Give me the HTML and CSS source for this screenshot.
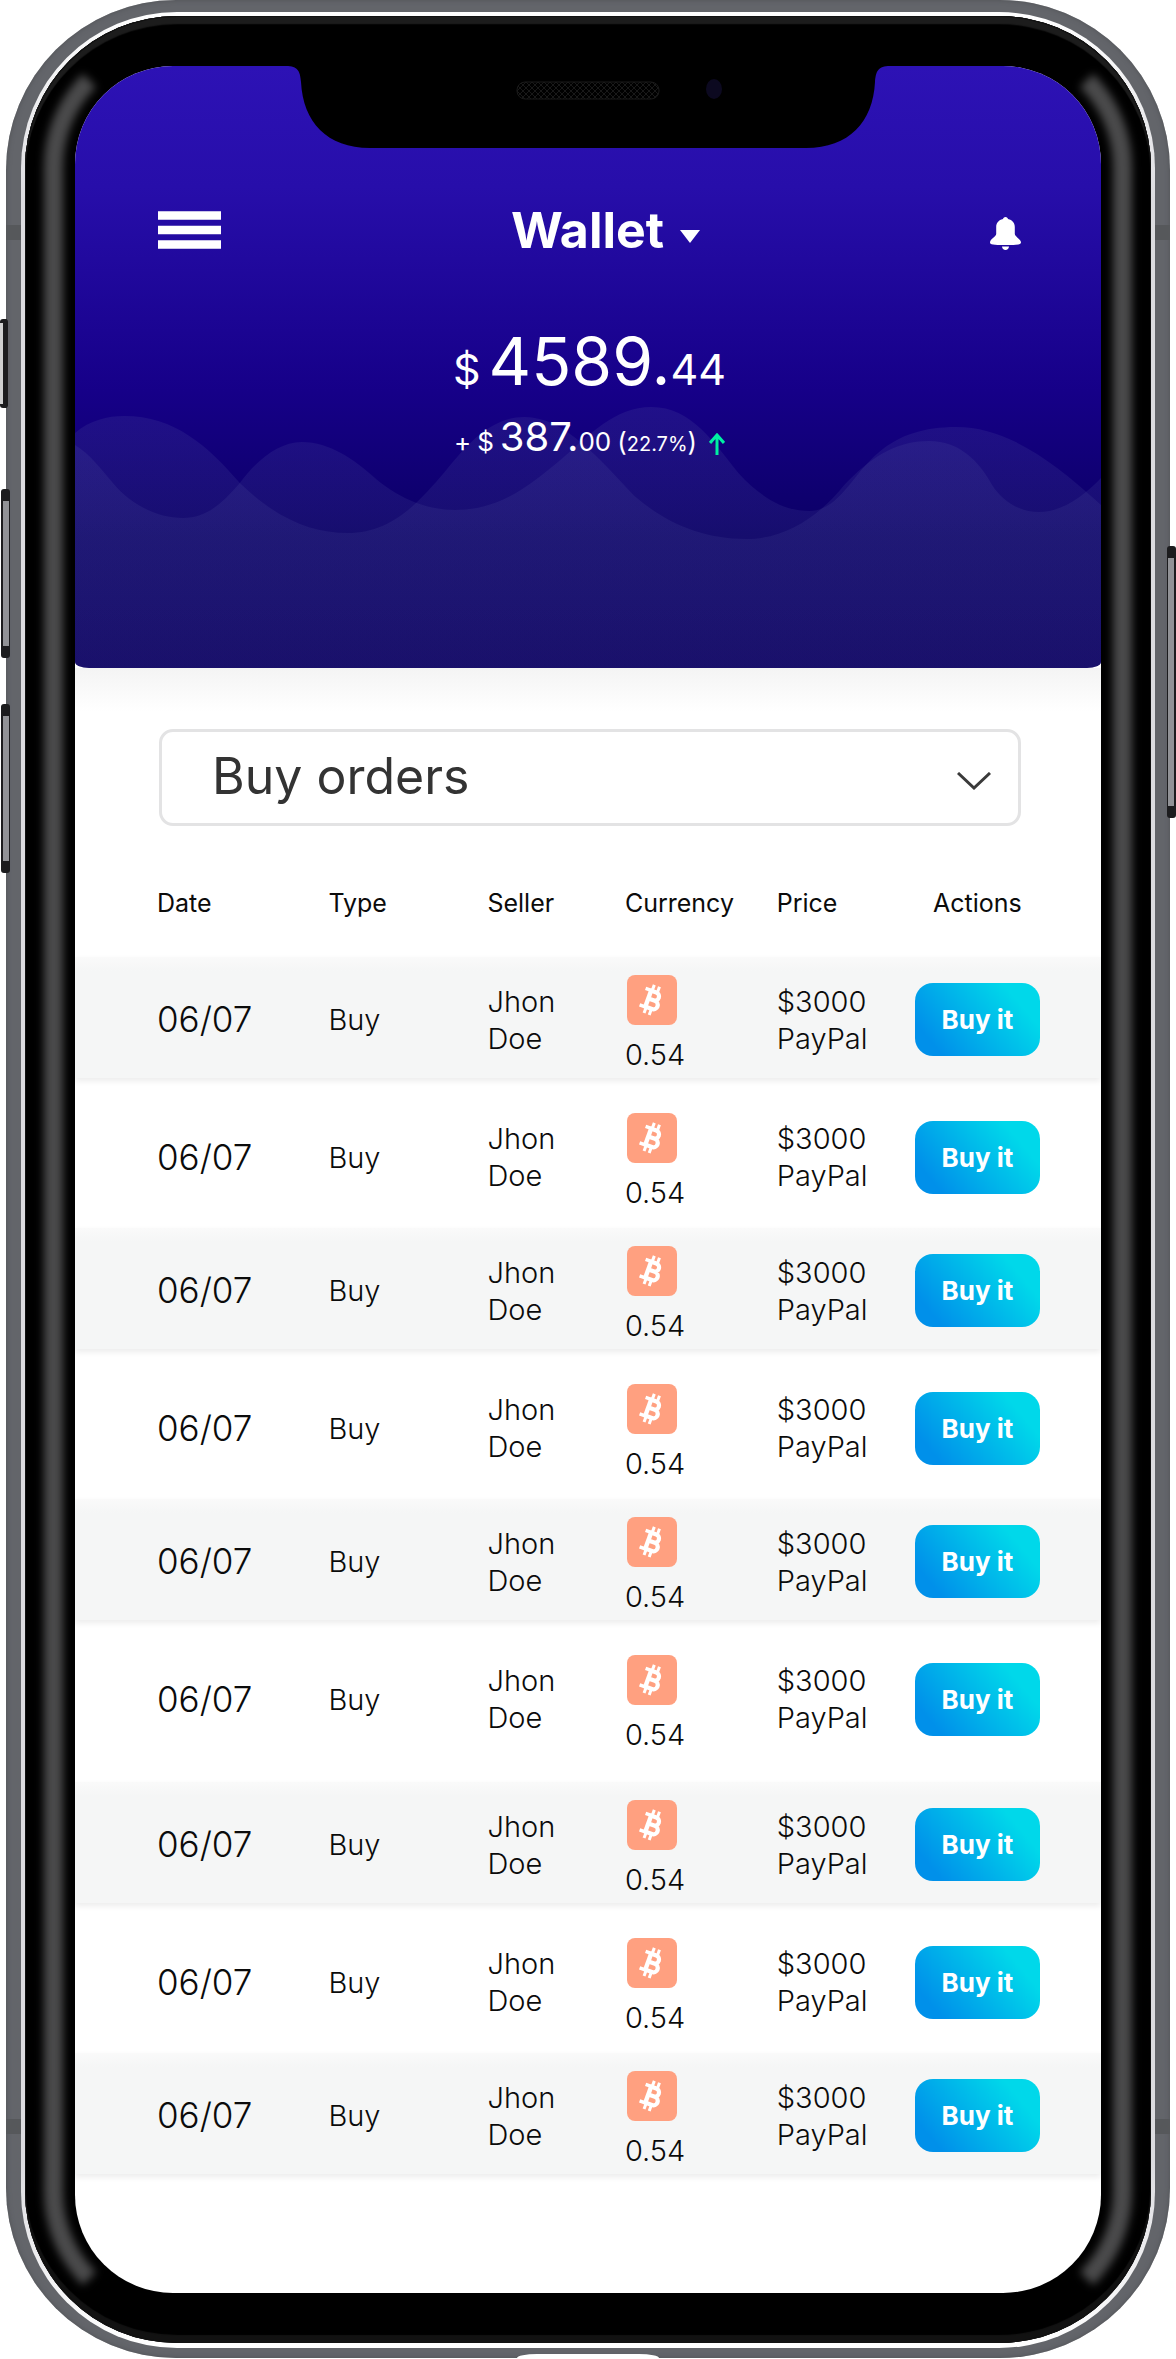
FILE: index.html
```html
<!DOCTYPE html>
<html lang="en">
<head>
<meta charset="utf-8">
<meta name="viewport" content="width=device-width, initial-scale=1">
<title>Wallet</title>
<link rel="stylesheet" href="styles.css">
</head>
<body>
<svg class="defs" aria-hidden="true">
  <symbol id="btc" viewBox="0 0 50 50">
    <g transform="rotate(20 25 25)" fill="none" stroke="#fff">
      <path d="M20 16.500H26.500A4 4 0 0 1 26.500 24.800H21M26.500 24.800H28A4.300 4.300 0 0 1 28 33.500H20" stroke-width="4.200"/>
      <path d="M21 15V35" stroke-width="4.400"/>
      <path d="M15 16.200H21M15 33.800H21" stroke-width="3.400"/>
      <path d="M22 10V16M27.500 10V16M22 34V40M27.500 34V40" stroke-width="3"/>
    </g>
  </symbol>
</svg>
<div class="phone">
  <i class="key key-mute"></i><i class="key key-up"></i><i class="key key-down"></i><i class="key key-power"></i>
  <i class="band band-top"></i><i class="band band-bottom"></i>
  <i class="port"></i>
  <div class="rim">
    <div class="bezel">
      <svg class="notch" viewBox="0 0 604 84" aria-hidden="true">
        <defs>
          <pattern id="mesh" width="6" height="6" patternUnits="userSpaceOnUse"><path d="M0 0L6 6M6 0L0 6" stroke="#191919" stroke-width="1"/></pattern>
        </defs>
        <path d="M0 0H604V2C592 2 590 7 589 18C587 58 563 84 520 84H84C41 84 17 58 15 18C14 7 12 2 0 2Z" fill="#000"/>
        <rect x="231" y="18" width="142" height="17" rx="8" fill="url(#mesh)" stroke="#1a1a1a"/>
        <ellipse cx="428" cy="25" rx="8" ry="10" fill="#0c0920"/>
      </svg>
      <main class="screen">
        <header class="hero">
          <svg class="waves" viewBox="0 0 1027 602" preserveAspectRatio="none" aria-hidden="true">
            <defs>
              <linearGradient id="haze" gradientUnits="userSpaceOnUse" x1="0" y1="340" x2="0" y2="602">
                <stop offset="0" stop-color="#5a5fa5" stop-opacity="0.17"/>
                <stop offset="0.4" stop-color="#5a5fa5" stop-opacity="0.15"/>
                <stop offset="1" stop-color="#5a5fa5" stop-opacity="0.09"/>
              </linearGradient>
            </defs>
            <path d="M0 367C15 354 33 350 49 350C100 350 133 380 165 417C202 453 237 467 273 467C318 467 345 435 370 406C395 375 418 351 450 351C490 351 525 393 560 430C590 456 627 473 672 473C712 473 745 450 770 419C795 393 820 375 855 375C885 375 905 395 918 419C928 435 945 446 965 446C988 446 1010 430 1027 412V602H0Z"/>
            <path d="M0 379C15 388 26 403 38 417C55 438 82 452 108 452C134 452 150 434 165 417C182 394 204 376 227 376C255 376 280 394 298 410C320 430 350 444 380 444C425 444 455 420 487 393C515 369 540 341 577 341C617 341 640 377 664 407C687 432 710 445 735 445C765 445 778 408 805 386C825 369 850 361 882 361C930 361 975 391 1027 439V602H0Z"/>
          </svg>
          <div class="bar">
            <button class="icon-button" aria-label="Menu">
              <svg width="63" height="38" viewBox="0 0 63 38"><path d="M0 4.500H63M0 19H63M0 33.500H63" stroke="#fff" stroke-width="8.500"/></svg>
            </button>
            <button class="title">Wallet
              <svg width="20" height="13" viewBox="0 0 20 13"><path d="M0 0H20L10 13Z" fill="#fff"/></svg>
            </button>
            <button class="icon-button" aria-label="Notifications">
              <svg class="bell" width="31" height="33" viewBox="0 0 31 33" fill="#fff"><path d="M15.500 0C17 0 17.800 1 18 2C22.500 3 24.800 6 24.800 10V17C25 20 31 22 31 25.500C31 27.500 28 28 15.500 28S0 27.500 0 25.500C0 22 6 20 6.200 17V10C6.200 6 8.500 3 13 2C13.200 1 14 0 15.500 0ZM12 29.500H19C18.800 31.500 17.500 33 15.500 33S12.200 31.500 12 29.500Z"/></svg>
            </button>
          </div>
          <p class="balance"><span class="mid">$</span><span class="big">4589.</span><span class="mid">44</span></p>
          <p class="change"><span class="small">+</span><span class="small">$</span><span class="sum"><span class="medium">387.</span><span class="small">00</span></span><span class="small">(<span class="tiny">22.7%</span>)</span>
            <svg class="up" width="16" height="22" viewBox="0 0 16 22"><path d="M8 22V2M1 10L8 2L15 10" fill="none" stroke="#00f0a2" stroke-width="3"/></svg>
          </p>
        </header>
        <div class="filter">
          <select class="filter-select" aria-label="Order type"><option>Buy orders</option><option>Sell orders</option></select>
          <svg class="chevron" width="34" height="18" viewBox="0 0 34 18"><path d="M1 1L17 16L33 1" fill="none" stroke="#3a3a3a" stroke-width="3"/></svg>
        </div>
        <table class="orders">
          <colgroup><col class="c-date"><col class="c-type"><col class="c-seller"><col class="c-currency"><col class="c-price"><col></colgroup>
          <thead><tr><th>Date</th><th>Type</th><th>Seller</th><th>Currency</th><th>Price</th><th>Actions</th></tr></thead>
          <tbody>
            <tr><td>06/07</td><td>Buy</td><td>Jhon<br>Doe</td><td><svg class="coin"><use href="#btc"/></svg>0.54</td><td>$3000<br>PayPal</td><td><button class="buy">Buy it</button></td></tr>
            <tr><td>06/07</td><td>Buy</td><td>Jhon<br>Doe</td><td><svg class="coin"><use href="#btc"/></svg>0.54</td><td>$3000<br>PayPal</td><td><button class="buy">Buy it</button></td></tr>
            <tr><td>06/07</td><td>Buy</td><td>Jhon<br>Doe</td><td><svg class="coin"><use href="#btc"/></svg>0.54</td><td>$3000<br>PayPal</td><td><button class="buy">Buy it</button></td></tr>
            <tr><td>06/07</td><td>Buy</td><td>Jhon<br>Doe</td><td><svg class="coin"><use href="#btc"/></svg>0.54</td><td>$3000<br>PayPal</td><td><button class="buy">Buy it</button></td></tr>
            <tr><td>06/07</td><td>Buy</td><td>Jhon<br>Doe</td><td><svg class="coin"><use href="#btc"/></svg>0.54</td><td>$3000<br>PayPal</td><td><button class="buy">Buy it</button></td></tr>
            <tr class="group-end"><td>06/07</td><td>Buy</td><td>Jhon<br>Doe</td><td><svg class="coin"><use href="#btc"/></svg>0.54</td><td>$3000<br>PayPal</td><td><button class="buy">Buy it</button></td></tr>
            <tr><td>06/07</td><td>Buy</td><td>Jhon<br>Doe</td><td><svg class="coin"><use href="#btc"/></svg>0.54</td><td>$3000<br>PayPal</td><td><button class="buy">Buy it</button></td></tr>
            <tr><td>06/07</td><td>Buy</td><td>Jhon<br>Doe</td><td><svg class="coin"><use href="#btc"/></svg>0.54</td><td>$3000<br>PayPal</td><td><button class="buy">Buy it</button></td></tr>
            <tr><td>06/07</td><td>Buy</td><td>Jhon<br>Doe</td><td><svg class="coin"><use href="#btc"/></svg>0.54</td><td>$3000<br>PayPal</td><td><button class="buy">Buy it</button></td></tr>
          </tbody>
        </table>
      </main>
    </div>
  </div>
</div>
</body>
</html>
```
FILE: styles.css
```css
* { box-sizing: border-box; }

body {
  margin: 0;
  background: #fff;
  color: #0b0b0b;
  font-family: Inter, "Liberation Sans", sans-serif;
}

button, select { font: inherit; }

button {
  border: 0;
  padding: 0;
  background: none;
  color: inherit;
  cursor: pointer;
}

svg { display: block; }

.defs { position: absolute; width: 0; height: 0; }

/* Phone shell */
.phone {
  position: relative;
  margin: 0 6px;
  padding: 12px 15px 10px;
  border-radius: 170px;
  background: #63656a;
  box-shadow: inset 0 0 5px #505256;
}

.rim {
  position: relative;
  padding: 4px 4px 5px;
  border-radius: 156px;
  background: linear-gradient(#fff, #dcdce0 8%, #dcdce0 92%, #fff);
}

.bezel {
  position: relative;
  padding: 50px;
  border-radius: 152px;
  background: #000;
  box-shadow: inset 0 0 0 1px #111, inset 0 8px 1px #1c1c1c, inset 0 -8px 1px #121212, inset 0 9px 0 #050505;
}

/* Soft reflection along both long edges of the glass */
.bezel::before {
  content: "";
  position: absolute;
  inset: 19px;
  border: 19px solid transparent;
  border-left-color: #4a4a4b;
  border-right-color: #4a4a4b;
  border-radius: 132px;
  filter: blur(4px);
}

.key {
  position: absolute;
  left: -5px;
  width: 9px;
  height: 169px;
  border: solid #1c1c1e;
  border-width: 12px 1px 12px 2px;
  border-radius: 3px;
  background: #919296;
}

.key-mute { left: -6px; top: 319px; width: 8px; height: 89px; border-width: 4px 5px 4px 0; background: #d0d0d0; }
.key-up { top: 489px; }
.key-down { top: 704px; }
.key-power { left: auto; right: -6px; top: 546px; height: 272px; border-width: 12px 2px 12px 1px; }

.band {
  position: absolute;
  left: 0;
  right: 0;
  height: 15px;
  background: #56585b;
}

.band-top { top: 225px; }
.band-bottom { bottom: 224px; }

.port {
  position: absolute;
  bottom: 0;
  left: 50%;
  width: 142px;
  height: 4px;
  margin-left: -71px;
  border-radius: 20px 20px 0 0 / 4px 4px 0 0;
  background: #fff;
}

.notch {
  position: absolute;
  z-index: 2;
  top: 48px;
  left: 50%;
  width: 604px;
  height: 84px;
  margin-left: -302px;
}

/* Screen */
.screen {
  position: relative;
  overflow: hidden;
  padding-bottom: 119px;
  border-radius: 98px;
  background: #fff;
}

.hero {
  position: relative;
  height: 602px;
  padding: 140px 80px 0 83px;
  border-radius: 0 0 14px 14px / 0 0 6px 6px;
  overflow: hidden;
  background: linear-gradient(#2d12b5, #270eaa 20%, #160088 54%, #0b0065 78%, #0c005f);
  color: #fff;
}

.waves {
  position: absolute;
  inset: 0;
  width: 100%;
  height: 100%;
  fill: url(#haze);
}

.bar {
  position: relative;
  display: grid;
  grid-template-columns: 1fr auto 1fr;
  align-items: center;
  height: 48px;
}

.bar > :last-child { justify-self: end; }
.icon-button { justify-self: start; }
.bell { margin-top: 6px; }

.title {
  display: flex;
  align-items: center;
  gap: 16px;
  padding-left: 32px;
  font-size: 50px;
  line-height: 48px;
  font-weight: 700;
}

.title svg { margin-top: 12px; }

.balance, .change {
  position: relative;
  display: flex;
  justify-content: center;
  align-items: baseline;
  margin: 0;
}

.balance { margin-top: 67px; line-height: 80px; font-weight: 400; }
.change { margin-top: 4px; gap: 6px; line-height: 48px; font-weight: 400; }
.big { font-size: 66px; }
.mid { font-size: 43px; }
.balance .mid:first-child { margin-right: 8px; }
.medium { font-size: 40px; }
.small { font-size: 26px; }
.tiny { font-size: 20px; }
.up { margin-left: 6px; transform: translateY(4px); }

.filter {
  position: relative;
  padding: 61px 80px 0 84px;
  background: linear-gradient(#f4f4f4, #fff 44px);
}

.filter-select {
  display: block;
  width: 100%;
  height: 97px;
  padding: 0 50px 4px;
  border: 3px solid #e3e3e4;
  border-radius: 14px;
  appearance: none;
  background: #fff;
  color: #333;
  font-size: 50px;
  font-weight: 400;
}

.chevron {
  position: absolute;
  right: 110px;
  bottom: 36px;
  pointer-events: none;
}

/* Orders */
.orders {
  width: 100%;
  table-layout: fixed;
  border-spacing: 0;
  font-size: 29px;
  line-height: 37px;
  font-weight: 300;
}

.c-date { width: 24.7%; }
.c-type { width: 15.5%; }
.c-seller { width: 13.4%; }
.c-currency { width: 14.8%; }
.c-price { width: 12.3%; }

.orders th {
  height: 131px;
  padding: 24px 0 0;
  font-size: 25px;
  font-weight: 400;
  text-align: left;
}

.orders th:last-child, .orders td:last-child { padding-right: 49px; text-align: center; }
.orders th:first-child, .orders td:first-child { padding-left: 82px; }

.orders td { height: 150px; padding: 8px 0 0; }
.orders td:nth-child(4) { padding-top: 18px; }
.orders td:first-child { font-size: 35px; }

.orders tbody tr:nth-child(odd) {
  background: linear-gradient(#fafafa, #f5f6f6 14px);
  box-shadow: 0 3px 6px rgba(0, 0, 0, 0.08);
}

.orders tbody tr:nth-child(odd) td { height: 121px; padding-top: 4px; }
.orders tbody tr:nth-child(odd) td:nth-child(4) { padding-top: 13px; }
.orders .group-end td { height: 162px; padding-bottom: 12px; }

.coin {
  width: 50px;
  height: 50px;
  margin: 0 0 11px 2px;
  border-radius: 8px;
  background: #ffa080;
}

.buy {
  width: 125px;
  height: 73px;
  border-radius: 18px;
  background: linear-gradient(50deg, #0090ea 15%, #00d8ea 80%);
  color: #fff;
  font-size: 26px;
  font-weight: 700;
}
```
